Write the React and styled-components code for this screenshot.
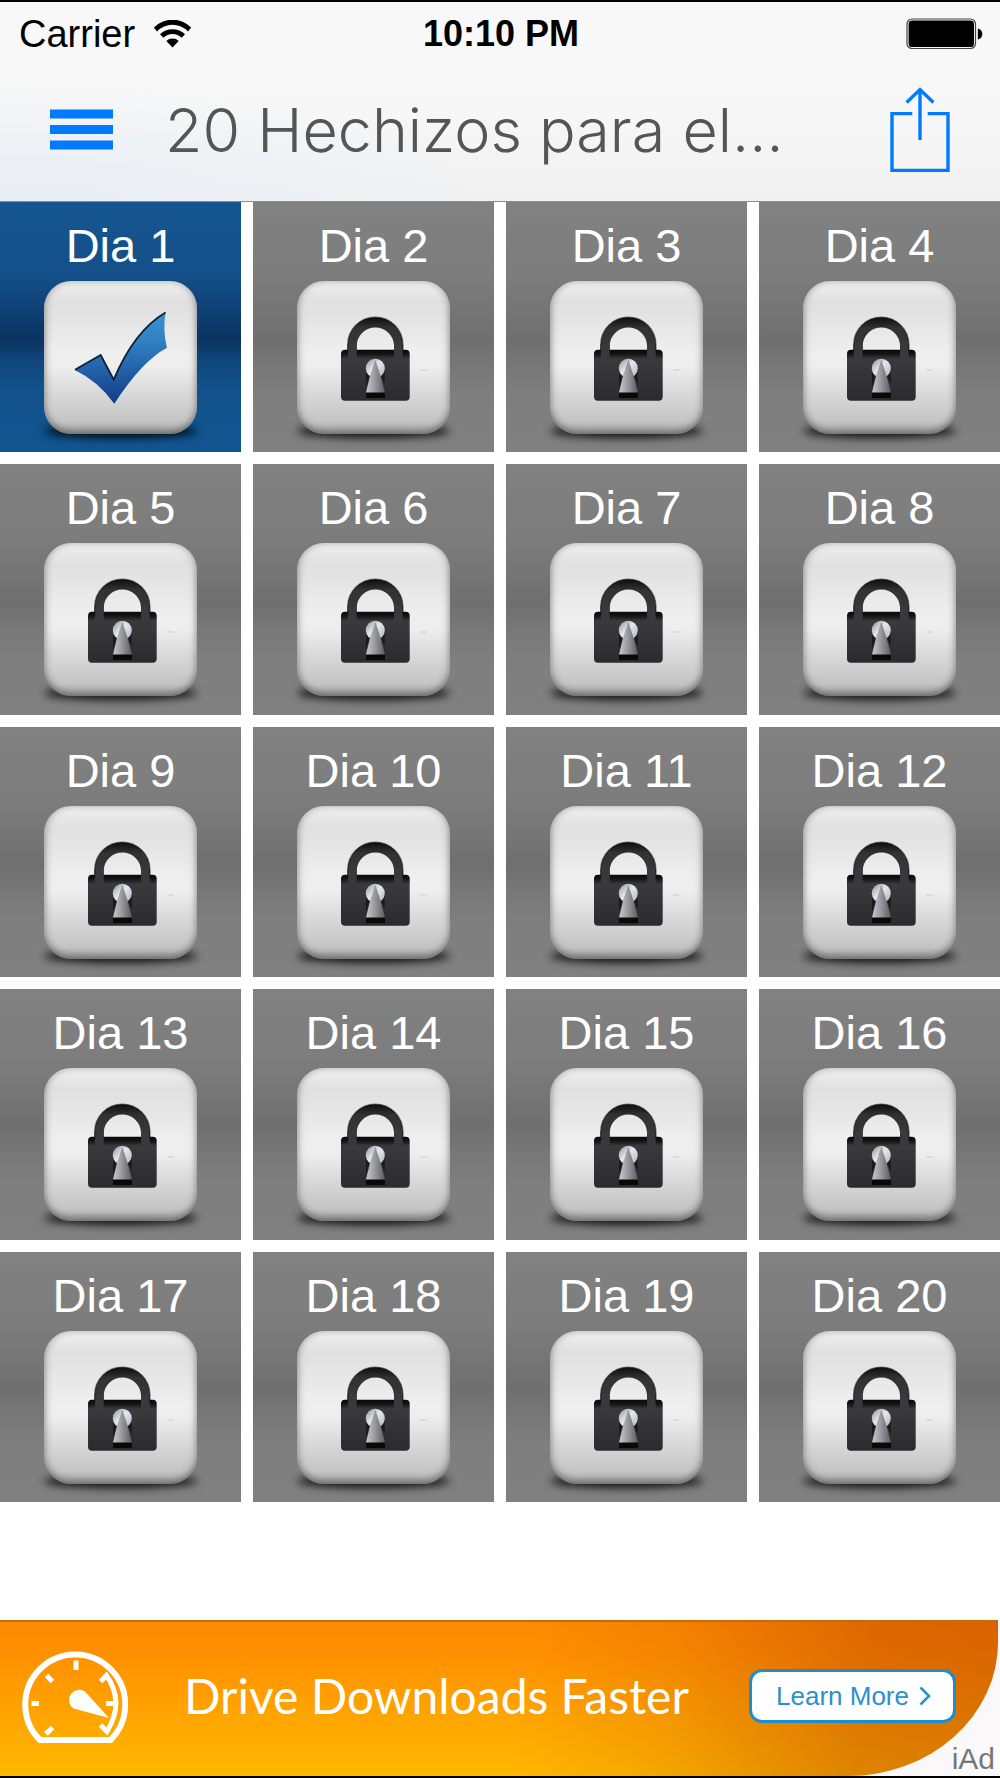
import styled, { createGlobalStyle } from "styled-components";

const DAYS = Array.from({ length: 20 }, (_, i) => i + 1);
const OPEN_DAY = 1;

function WifiIcon() {
  return (
    <svg width="39" height="28" viewBox="0 0 39 28" aria-hidden="true">
      <path d="M.8 7.6A26 26 0 0 1 38.2 7.6L35 11.4A21.5 21.5 0 0 0 4 11.4Z" fill="#000" />
      <path d="M7 14.2A18 18 0 0 1 32 14.2L28.7 17.8A13 13 0 0 0 10.3 17.8Z" fill="#000" />
      <path d="M13.3 21A9 9 0 0 1 25.7 21L19.5 27.4Z" fill="#000" />
    </svg>
  );
}

function BatteryIcon() {
  return (
    <svg width="77" height="32" viewBox="0 0 77 32" aria-hidden="true">
      <rect x="1" y="1" width="68.5" height="29.5" rx="5" fill="#f8f8f8" stroke="#444" strokeWidth="1.2" />
      <rect x="2.6" y="2.6" width="65.4" height="26.4" rx="3.6" fill="#000" />
      <path d="M71.8 10.6C77.8 11.6 77.8 20.4 71.8 21.4Z" fill="#000" />
    </svg>
  );
}

function MenuIcon() {
  return (
    <svg width="63" height="41" viewBox="0 0 63 41" aria-hidden="true">
      <path d="M0 .5h63v9H0zM0 16h63v9H0zM0 31.5h63v9H0z" fill="#007aff" />
    </svg>
  );
}

function ShareIcon() {
  return (
    <svg width="60" height="86" viewBox="0 0 60 86" fill="none" stroke="#007aff" strokeWidth="3.4" aria-hidden="true">
      <path d="M22.3 26.6H2V83.4H58V26.6H37.7" />
      <path d="M30 2.5V53" />
      <path d="M16.6 15.4L30 2.6L43.4 15.4" />
    </svg>
  );
}

function LockIcon() {
  return (
    <svg width="153" height="153" viewBox="0 0 153 153" aria-hidden="true">
      <path
        d="M50.7 72V63.8a27.6 27.6 0 0 1 55.2 0V72H97V63.9a18.7 18.7 0 0 0-37.3 0V72Z"
        fill="url(#shackle)"
      />
      <rect x="44" y="68.8" width="68.7" height="51" rx="4" fill="url(#lockBody)" />
      <path d="M50.7 63H59.7V80H50.7zM97 63H105.9V80H97z" fill="#39383a" />
      <path d="M50.7 72V63.8a27.6 27.6 0 0 1 55.2 0V72" fill="none" stroke="#0c0c0c" strokeOpacity=".55" strokeWidth="1.4" />
      <path d="M69 88a9.4 9.4 0 0 0 3.5 7.5L69 106V88Z" fill="#0a0a0a" opacity=".6" />
      <path d="M87.7 88a9.4 9.4 0 0 1-3.5 7.5L87.7 103V88Z" fill="#0a0a0a" opacity=".6" />
      <rect x="69" y="111" width="19" height="6" fill="#0a090a" />
      <circle cx="78.3" cy="87.2" r="9.5" fill="url(#keyRound)" />
      <path d="M78.3 78.5L73 95L69 111.6H88L83.6 95Z" fill="url(#keyCone)" />
      <path d="M124 89h5" stroke="#dcdcdc" strokeWidth="2" strokeLinecap="round" />
    </svg>
  );
}

function CheckIcon() {
  return (
    <svg width="153" height="153" viewBox="0 0 153 153" aria-hidden="true">
      <path
        d="M30.7 89L56.7 73.7L69.7 98.7Q90 50 121.7 31Q118.4 50 123 66.7Q98 80 70.3 122.7Q54 100 30.7 89Z"
        fill="url(#check)"
      />
      <path d="M31 88.8L56.7 74L69.7 98.7Q90 50 121.5 31.4" fill="none" stroke="#0c2136" strokeWidth="1.8" />
    </svg>
  );
}

function GaugeIcon() {
  return (
    <svg width="106" height="94" viewBox="0 0 106 94" fill="none" stroke="#fff" aria-hidden="true">
      <path d="M18 91H88.5A50 50 0 1 0 18 91Z" strokeWidth="6" strokeLinejoin="round" />
      <path d="M54 11.5V21M24.5 26.5L30.5 32.5M9.5 54.5H17M24 85L30.5 78.5" strokeWidth="5" />
      <path d="M78.5 32.5L84.5 26.5Q103 53 85 82.5L78.5 76M92 54.5H84" strokeWidth="5" />
      <path d="M63 42.5L87 69L51.5 59.5A10 10 0 1 1 63 42.5Z" fill="#fff" stroke="none" />
    </svg>
  );
}

// gradients shared by every tile icon
function IconGradients() {
  return (
    <HiddenSvg aria-hidden="true">
      <defs>
        <linearGradient id="shackle" x1="0" y1="0" x2="0" y2="1">
          <stop offset="0" stopColor="#0e0d0e" />
          <stop offset=".3" stopColor="#333233" />
          <stop offset="1" stopColor="#39383a" />
        </linearGradient>
        <linearGradient id="lockBody" x1="0" y1="0" x2="0" y2="1">
          <stop offset="0" stopColor="#0a090a" />
          <stop offset=".08" stopColor="#151415" />
          <stop offset=".18" stopColor="#3a393b" />
          <stop offset="1" stopColor="#2b2a2c" />
        </linearGradient>
        <linearGradient id="keyRound" x1="0" y1="0" x2="1" y2="1">
          <stop offset="0" stopColor="#8f8f96" />
          <stop offset=".45" stopColor="#e6e6ee" />
          <stop offset="1" stopColor="#b4b4bc" />
        </linearGradient>
        <linearGradient id="keyCone" x1="0" y1="0" x2="1" y2="0">
          <stop offset="0" stopColor="#c9c9cf" />
          <stop offset=".45" stopColor="#9a9a9f" />
          <stop offset="1" stopColor="#5c5c60" />
        </linearGradient>
        <linearGradient id="check" x1="0" y1="0" x2="0" y2="1">
          <stop offset="0" stopColor="#3a94d0" />
          <stop offset=".35" stopColor="#2f7ec2" />
          <stop offset="1" stopColor="#123c86" />
        </linearGradient>
      </defs>
    </HiddenSvg>
  );
}

function DayTile({ day, open }) {
  return (
    <StyledTile type="button" $open={open}>
      <TileLabel>Dia {day}</TileLabel>
      <TileCard>{open ? <CheckIcon /> : <LockIcon />}</TileCard>
    </StyledTile>
  );
}

function App() {
  return (
    <Screen>
      <GlobalStyle />
      <IconGradients />
      <Header>
        <StatusBar>
          <Carrier>
            Carrier
            <WifiIcon />
          </Carrier>
          <Clock>10:10 PM</Clock>
          <Battery>
            <BatteryIcon />
          </Battery>
        </StatusBar>
        <NavBar>
          <IconButton type="button" aria-label="Menu">
            <MenuIcon />
          </IconButton>
          <Title>20 Hechizos para el…</Title>
          <IconButton type="button" aria-label="Share">
            <ShareIcon />
          </IconButton>
        </NavBar>
      </Header>
      <DayGrid>
        {DAYS.map((day) => (
          <DayTile key={day} day={day} open={day === OPEN_DAY} />
        ))}
      </DayGrid>
      <AdBanner>
        <AdBody>
          <GaugeIcon />
          <AdText>Drive Downloads Faster</AdText>
          <LearnMore href="#learn-more">
            Learn More
            <svg width="12" height="20" viewBox="0 0 12 20" aria-hidden="true">
              <path d="M1.5 1.5L10 10L1.5 18.5" fill="none" stroke="#2a90cf" strokeWidth="2.6" />
            </svg>
          </LearnMore>
        </AdBody>
        <AdMark>iAd</AdMark>
      </AdBanner>
    </Screen>
  );
}

const GlobalStyle = createGlobalStyle`
  * {
    box-sizing: border-box;
  }

  body {
    margin: 0;
    background: #fff;
    font-family: "Liberation Sans", Arial, sans-serif;
  }
`;

const HiddenSvg = styled.svg`
  position: absolute;
  width: 0;
  height: 0;
`;

const Screen = styled.div`
  display: flex;
  flex-direction: column;
  min-height: 100vh;
  border-top: 2px solid #000;
  border-bottom: 2px solid #000;
`;

const Header = styled.header`
  border-bottom: 1px solid #8c8e90;
  background:
    radial-gradient(ellipse 50% 60% at 0 100%, rgba(226, 235, 245, 0.7), rgba(226, 235, 245, 0)),
    linear-gradient(#f8f8f8 45%, #f1f1f1);
`;

const StatusBar = styled.div`
  display: grid;
  grid-template-columns: 1fr auto 1fr;
  align-items: center;
  height: 64px;
  padding: 0 17px 0 19px;
  font-size: 38px;
  color: #000;
`;

const Carrier = styled.div`
  display: flex;
  align-items: center;
  gap: 18px;
`;

const Clock = styled.div`
  font-size: 36px;
  font-weight: 700;
`;

const Battery = styled.div`
  display: flex;
  justify-content: flex-end;
`;

const NavBar = styled.div`
  display: flex;
  align-items: center;
  height: 135px;
  padding: 0 50px 8px;
`;

const IconButton = styled.button`
  display: flex;
  padding: 0;
  border: 0;
  background: none;
  cursor: pointer;
`;

const Title = styled.h1`
  flex: 1;
  margin: 0 0 0 52px;
  font-family: Inter, "Liberation Sans", sans-serif;
  font-size: 61px;
  font-weight: 300;
  line-height: 72px;
  color: #555;
  white-space: nowrap;
`;

const DayGrid = styled.main`
  flex: 1;
  display: grid;
  grid-template-columns: repeat(4, 1fr);
  grid-auto-rows: 1fr;
  gap: 12px;
  margin-bottom: 118px;
`;

const StyledTile = styled.button`
  display: flex;
  flex-direction: column;
  align-items: center;
  padding: 16px 0 0;
  border: 0;
  isolation: isolate;
  font-family: inherit;
  color: #fff;
  background: ${(props) =>
    props.$open
      ? "linear-gradient(#15558f, #14508a 28%, #0f4278 42%, #0b3360 55%, #0f477e 64%, #12528c 76%, #115590)"
      : "linear-gradient(#818181, #7d7d7d 28%, #757575 44%, #6f6f6f 55%, #787878 66%, #7f7f7f 78%, #808080)"};
  cursor: pointer;
`;

const TileLabel = styled.span`
  font-size: 47px;
  line-height: 56px;
`;

const TileCard = styled.span`
  position: relative;
  width: 153px;
  height: 153px;
  margin-top: 7px;

  /* the floor shadow that shows below the card */
  &::before {
    content: "";
    position: absolute;
    z-index: -2;
    left: 0;
    right: 0;
    bottom: -4px;
    height: 14px;
    border-radius: 50%;
    background: rgba(0, 0, 0, 0.85);
    filter: blur(4px);
  }

  &::after {
    content: "";
    position: absolute;
    z-index: -1;
    inset: 0;
    border-radius: 27px;
    background: linear-gradient(#f0f0f0, #e0e0e0 14%, #e3e3e3 22%, #efefef 48%, #eee 56%, #d8d8d8 74%, #c4c4c4 92%, #a0a0a0);
    box-shadow:
      inset 0 -3px 6px rgba(70, 70, 70, 0.5),
      inset -3px 0 7px rgba(120, 120, 120, 0.2),
      inset 3px 0 7px rgba(120, 120, 120, 0.2);
  }
`;

const AdBanner = styled.aside`
  position: relative;
  padding-right: 2px;
  background: #fbf8f9;
`;

const AdBody = styled.div`
  display: flex;
  align-items: center;
  height: 156px;
  padding: 0 42px 6px 22px;
  border-top: 2px solid #c26d0c;
  border-bottom-right-radius: 150px 134px;
  background:
    linear-gradient(100deg, rgba(157, 33, 0, 0) 52%, rgba(157, 33, 0, 0.1) 66%, rgba(157, 33, 0, 0.34) 86%, rgba(157, 33, 0, 0.38)),
    linear-gradient(#ff8a00, #ff9000 20%, #ffb800);
`;

const AdText = styled.p`
  flex: 1;
  margin: 0 0 0 56px;
  font-family: Lato, "Open Sans", sans-serif;
  font-size: 48px;
  line-height: 60px;
  color: #fff;
  white-space: nowrap;
`;

const LearnMore = styled.a`
  display: flex;
  align-items: center;
  gap: 10px;
  height: 54px;
  padding: 0 22px 0 24px;
  border: 3px solid #1d8dce;
  border-radius: 13px;
  background: #fff;
  font-size: 26px;
  color: #2a90cf;
  text-decoration: none;
`;

const AdMark = styled.span`
  position: absolute;
  right: 5px;
  bottom: 0;
  font-size: 30px;
  line-height: 34px;
  color: #777;
`;

export default App;
